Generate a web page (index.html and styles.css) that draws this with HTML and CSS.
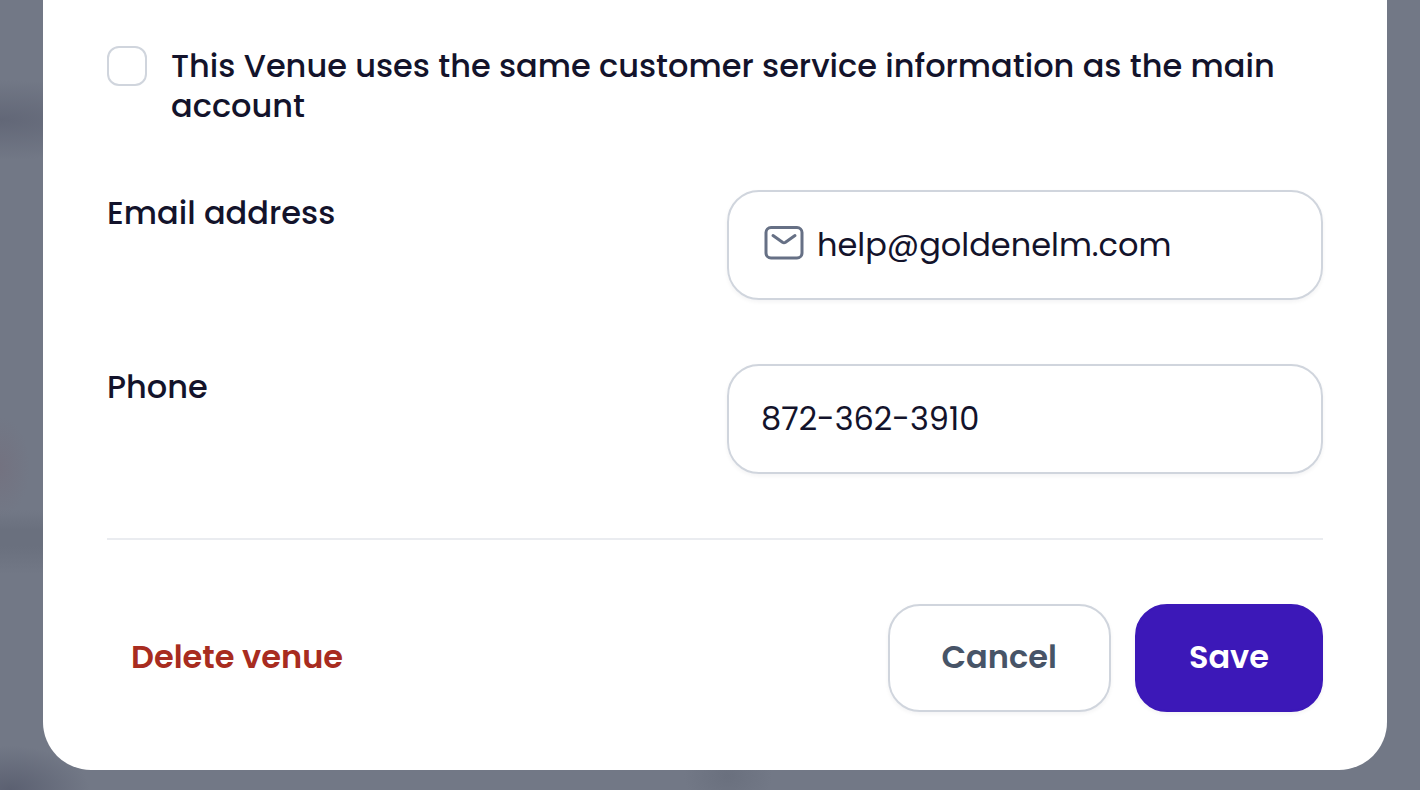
FILE: index.html
```html
<!DOCTYPE html>
<html lang="en">
<head>
  <meta charset="UTF-8">
  <meta name="viewport" content="width=device-width, initial-scale=1.0">
  <title>Edit venue</title>
  <link rel="stylesheet" href="styles.css">
</head>
<body>
  <form class="modal">
    <!-- same as main account -->
    <div class="check-row">
      <input class="checkbox" type="checkbox" id="same-info">
      <label class="check-label" for="same-info">This Venue uses the same customer service information as the main account</label>
    </div>

    <!-- contact fields -->
    <div class="row">
      <label class="label" for="email">Email address</label>
      <div class="field">
        <svg class="icon" viewBox="0 0 44 38" fill="none" stroke="currentColor" stroke-width="3" stroke-linecap="round" stroke-linejoin="round" aria-hidden="true">
          <rect x="5" y="1.500" width="36" height="30.500" rx="5"/>
          <path d="M12 9.500l9.500 6.800q1.500 1 3 0L34 9.500"/>
        </svg>
        <input class="input" type="email" id="email" value="help@goldenelm.com">
      </div>
    </div>

    <div class="row">
      <label class="label" for="phone">Phone</label>
      <div class="field">
        <input class="input" type="tel" id="phone" value="872-362-3910">
      </div>
    </div>

    <hr class="divider">

    <!-- buttons -->
    <div class="footer">
      <button class="btn btn-delete" type="button">Delete venue</button>
      <div class="actions">
        <button class="btn btn-cancel" type="button">Cancel</button>
        <button class="btn btn-save" type="submit">Save</button>
      </div>
    </div>
  </form>
</body>
</html>
```
FILE: styles.css
```css
* {
  box-sizing: border-box;
  margin: 0;
  padding: 0;
}

body {
  min-height: 100vh;
  padding: 0 33px 20px 43px;
  font-family: Poppins, Inter, "Open Sans", sans-serif;
  font-size: 32px;
  line-height: 40px;
  color: #13132b;
  /* blurred page behind the modal */
  background:
    radial-gradient(ellipse 80px 44px at 10px 790px, #5b6071, transparent),
    radial-gradient(ellipse 44px 34px at 728px 776px, #6a707e, transparent),
    radial-gradient(ellipse 30px 50px at 0 467px, #737280, transparent),
    radial-gradient(ellipse 150px 40px at 0 120px, #626777, transparent),
    linear-gradient(transparent 510px, #6a707e 530px, #6a707e 546px, transparent 574px) 0 0 / 43px 100% no-repeat,
    #727886;
}

.modal {
  display: flex;
  flex-direction: column;
  gap: 64px;
  padding: 46px 64px 58px;
  background: #fff;
  border-radius: 0 0 48px 48px;
}

.check-row {
  display: flex;
  align-items: flex-start;
  gap: 24px;
}

.checkbox {
  flex: none;
  width: 40px;
  height: 40px;
  appearance: none;
  background: #fff;
  border: 2px solid #d0d5dd;
  border-radius: 12px;
}

.checkbox:checked {
  background: #3c18b8;
  border-color: #3c18b8;
}

.check-label, .label {
  font-weight: 500;
}

.row {
  display: grid;
  grid-template-columns: repeat(2, minmax(0, 1fr));
  gap: 24px;
  align-items: start;
}

.label {
  line-height: 46px;
}

.field {
  display: flex;
  align-items: center;
  gap: 12px;
  height: 110px;
  padding: 0 32px;
  border: 2px solid #d0d5dd;
  border-radius: 32px;
  box-shadow: 0 2px 4px rgba(16, 24, 40, 0.05);
}

.icon {
  flex: none;
  width: 44px;
  height: 38px;
  color: #667085;
}

.input {
  flex: 1;
  min-width: 0;
  font: inherit;
  line-height: 48px;
  color: inherit;
  background: none;
  border: none;
  outline: none;
}

.divider {
  border: none;
  border-top: 2px solid #eaecf0;
}

.footer, .actions {
  display: flex;
  align-items: center;
}

.footer {
  justify-content: space-between;
}

.actions {
  gap: 24px;
}

.btn {
  height: 108px;
  padding: 0 52px 2px;
  font: inherit;
  font-weight: 600;
  border: 2px solid transparent;
  border-radius: 32px;
  cursor: pointer;
}

.btn-delete {
  padding: 0 22px 2px;
  color: #a82c20;
  background: none;
}

.btn-cancel {
  color: #475467;
  background: #fff;
  border-color: #d0d5dd;
  box-shadow: 0 2px 4px rgba(16, 24, 40, 0.05);
}

.btn-save {
  color: #fff;
  background: #3c18b8;
  border-color: #3c18b8;
  box-shadow: 0 2px 4px rgba(16, 24, 40, 0.05);
}
```
